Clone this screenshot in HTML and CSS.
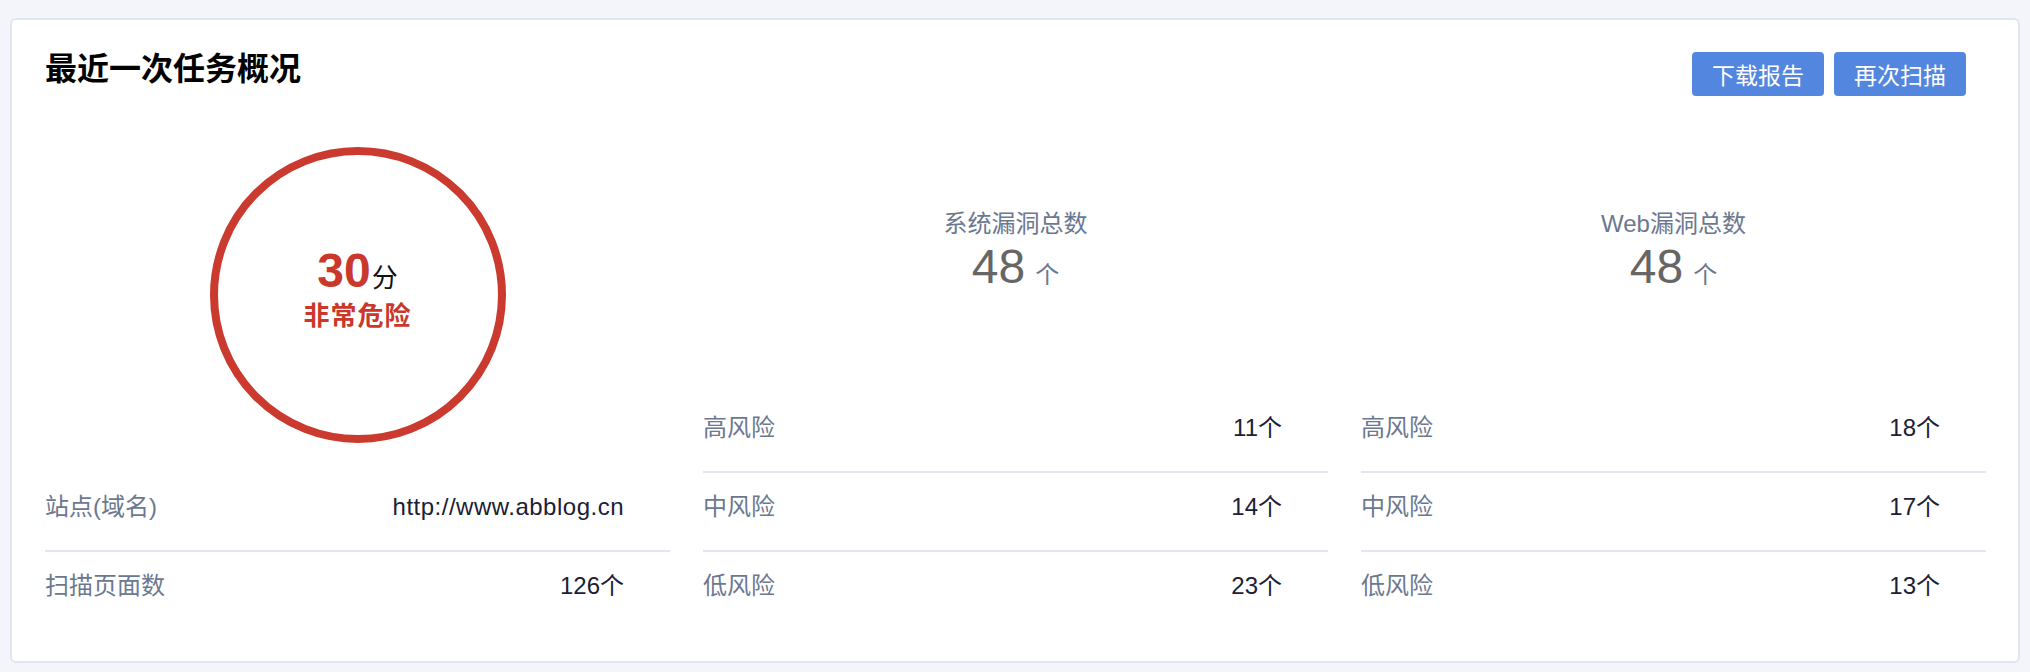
FILE: index.html
```html
<!DOCTYPE html>
<html lang="zh-CN">
<head>
<meta charset="utf-8">
<title>最近一次任务概况</title>
<link rel="stylesheet" href="styles.css">
</head>
<body>
<div class="card">
  <div class="card-head">
    <h2 class="card-title">最近一次任务概况</h2>
    <div class="actions">
      <button class="btn">下载报告</button>
      <button class="btn">再次扫描</button>
    </div>
  </div>
  <div class="card-body">
    <div class="col col-score">
      <div class="ring">
        <div class="score"><span class="score-num">30</span><span class="score-unit">分</span></div>
        <div class="score-level">非常危险</div>
      </div>
      <div class="rows">
        <div class="row"><span class="label">站点(域名)</span><span class="value value-url">http://www.abblog.cn</span></div>
        <div class="row"><span class="label">扫描页面数</span><span class="value">126个</span></div>
      </div>
    </div>
    <div class="col">
      <div class="total">
        <div class="total-title">系统漏洞总数</div>
        <div class="total-num">48<span class="total-unit">个</span></div>
      </div>
      <div class="rows">
        <div class="row"><span class="label">高风险</span><span class="value">11个</span></div>
        <div class="row"><span class="label">中风险</span><span class="value">14个</span></div>
        <div class="row"><span class="label">低风险</span><span class="value">23个</span></div>
      </div>
    </div>
    <div class="col">
      <div class="total">
        <div class="total-title">Web漏洞总数</div>
        <div class="total-num">48<span class="total-unit">个</span></div>
      </div>
      <div class="rows">
        <div class="row"><span class="label">高风险</span><span class="value">18个</span></div>
        <div class="row"><span class="label">中风险</span><span class="value">17个</span></div>
        <div class="row"><span class="label">低风险</span><span class="value">13个</span></div>
      </div>
    </div>
  </div>
</div>
</body>
</html>
```

FILE: styles.css
```css
* { box-sizing: border-box; }

body {
  margin: 0;
  padding: 18px 10px 9px;
  background: #f3f5fa;
  font-family: "Liberation Sans", "Noto Sans CJK SC", sans-serif;
}

.card {
  background: #fff;
  border: 2px solid #e1e5ee;
  border-radius: 6px;
  padding: 0 32px 32px 33px;
}

.card-head {
  display: flex;
  justify-content: space-between;
  align-items: flex-start;
  padding-top: 32px;
}

.card-title {
  margin: 0;
  font-size: 32px;
  line-height: 34px;
  font-weight: bold;
  color: #000;
}

.actions {
  display: flex;
  gap: 10px;
  margin-right: 20px;
}

.btn {
  width: 132px;
  height: 44px;
  border: none;
  border-radius: 4px;
  background: #5386de;
  color: #fff;
  font-family: "Liberation Sans", "Noto Sans CJK SC", sans-serif;
  font-size: 23px;
  padding: 0;
}

.card-body {
  display: grid;
  grid-template-columns: repeat(3, 1fr);
  column-gap: 33px;
}

.col {
  display: flex;
  flex-direction: column;
}

.ring {
  width: 296px;
  height: 296px;
  margin: 51px auto 30px;
  border: 8px solid #cb3a2e;
  border-radius: 50%;
  display: flex;
  flex-direction: column;
  align-items: center;
  justify-content: center;
  padding-bottom: 6px;
}

.score {
  line-height: 40px;
  height: 40px;
}

.score-num {
  font-size: 48px;
  font-weight: bold;
  color: #c9382b;
}

.score-unit {
  font-size: 26px;
  color: #111;
  margin-left: 1px;
}

.score-level {
  margin-top: 8px;
  font-size: 26px;
  line-height: 34px;
  font-weight: bold;
  color: #c9382b;
  letter-spacing: 1px;
}

.total {
  margin-top: 113px;
  text-align: center;
}

.total-title {
  font-size: 24px;
  line-height: 30px;
  color: #6b7890;
}

.total-num {
  font-size: 48px;
  line-height: 56px;
  color: #666;
}

.total-unit {
  font-size: 24px;
  color: #6b7890;
  margin-left: 10px;
}

.rows {
  margin-top: auto;
}

.row {
  display: flex;
  justify-content: space-between;
  padding: 20px 46px 29px 0;
  font-size: 24px;
  line-height: 28px;
  border-bottom: 2px solid #e3e6ee;
}

.row:last-child {
  border-bottom: none;
}

.label {
  color: #6b7890;
}

.value {
  color: #1b2036;
}

.value-url {
  letter-spacing: 0.5px;
}
```
